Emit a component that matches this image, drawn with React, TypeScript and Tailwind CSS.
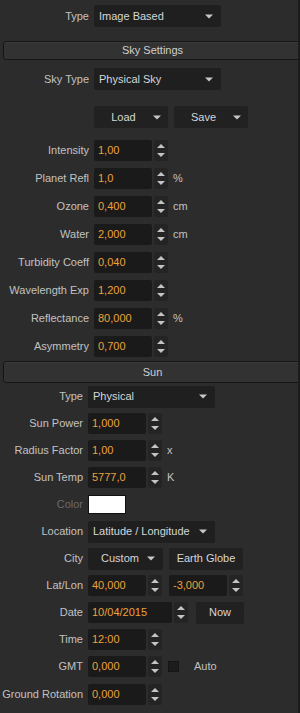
import React from 'react';

const font = { fontFamily: '"Liberation Sans", Arial, sans-serif' };

function Caret() {
  return (
    <svg width="8" height="5" viewBox="0 0 8 5" className="shrink-0">
      <path d="M0 0.5 L8 0.5 L4 4.5 Z" fill="#c8c8c8" />
    </svg>
  );
}

function Dropdown({ value, width, center }: { value: string; width: string; center?: boolean }) {
  return (
    <div className={`flex h-[22px] items-center rounded-[2px] bg-[#1f1f1f] pl-[5px] pr-[8px] text-[11px] text-[#d6d6d6] ${width}`}>
      <span className={`flex-1 whitespace-nowrap ${center ? 'text-center' : ''}`}>{value}</span>
      <Caret />
    </div>
  );
}

function Spinner() {
  return (
    <div className="ml-[2px] flex h-[21px] w-[14px] flex-col justify-between rounded-[2px] bg-[#242424] py-[3px]">
      <svg width="14" height="6" viewBox="0 0 14 6">
        <path d="M3 5 L11 5 L7 1 Z" fill="#c4c4c4" />
      </svg>
      <svg width="14" height="6" viewBox="0 0 14 6">
        <path d="M3 1 L11 1 L7 5 Z" fill="#c4c4c4" />
      </svg>
    </div>
  );
}

function NumField({ value, width = 'w-[58px]' }: { value: string; width?: string }) {
  return (
    <div className="flex items-center">
      <div className={`flex h-[21px] items-center rounded-[2px] bg-[#1a1a1a] pl-[4px] text-[11px] text-[#eda13a] ${width}`}>
        {value}
      </div>
      <Spinner />
    </div>
  );
}

function Row({
  label,
  labelW,
  h,
  dim,
  children,
}: {
  label: string;
  labelW: string;
  h: string;
  dim?: boolean;
  children: React.ReactNode;
}) {
  return (
    <div className={`flex items-center ${h}`}>
      <div className={`shrink-0 whitespace-nowrap pr-[5px] text-right text-[11px] ${dim ? 'text-[#6a6a6a]' : 'text-[#c2c2c2]'} ${labelW}`}>
        {label}
      </div>
      {children}
    </div>
  );
}

function Unit({ children }: { children: React.ReactNode }) {
  return <span className="ml-[5px] text-[11px] text-[#c2c2c2]">{children}</span>;
}

function SectionBar({ title, h }: { title: string; h: string }) {
  return (
    <div
      className={`ml-[3px] mr-[-4px] flex items-center justify-center rounded-l-[3px] border border-[#161616] bg-[#323232] text-[11px] text-[#cfcfcf] shadow-[inset_0_1px_0_#3a3a3a] ${h}`}
    >
      {title}
    </div>
  );
}

function Button({ label, width }: { label: string; width: string }) {
  return (
    <div className={`flex h-[22px] items-center justify-center rounded-[2px] bg-[#212121] text-[11px] text-[#d6d6d6] ${width}`}>
      {label}
    </div>
  );
}

const skyRows: { label: string; value: string; unit?: string }[] = [
  { label: 'Intensity', value: '1,00' },
  { label: 'Planet Refl', value: '1,0', unit: '%' },
  { label: 'Ozone', value: '0,400', unit: 'cm' },
  { label: 'Water', value: '2,000', unit: 'cm' },
  { label: 'Turbidity Coeff', value: '0,040' },
  { label: 'Wavelength Exp', value: '1,200' },
  { label: 'Reflectance', value: '80,000', unit: '%' },
  { label: 'Asymmetry', value: '0,700' },
];

export default function App() {
  const skyL = 'w-[94px]';
  const sunL = 'w-[88px]';
  const sunH = 'h-[27px]';
  return (
    <div style={font} className="h-[713px] w-[300px] overflow-hidden border-r-2 border-[#1c1c1c] bg-[#2c2c2c]">
      <Row label="Type" labelW={skyL} h="h-[32px]">
        <Dropdown value="Image Based" width="w-[127px]" />
      </Row>

      <div className="mt-[9px]">
        <SectionBar title="Sky Settings" h="h-[19px]" />
      </div>

      <Row label="Sky Type" labelW={skyL} h="h-[38px]">
        <Dropdown value="Physical Sky" width="w-[127px]" />
      </Row>

      <div className="flex h-[38px] items-center gap-[6px] pl-[94px]">
        <div className="flex h-[22px] w-[74px] items-center rounded-[2px] bg-[#212121] pr-[7px] text-[11px] text-[#d6d6d6]">
          <span className="flex-1 text-center">Load</span>
          <Caret />
        </div>
        <div className="flex h-[22px] w-[74px] items-center rounded-[2px] bg-[#212121] pr-[7px] text-[11px] text-[#d6d6d6]">
          <span className="flex-1 text-center">Save</span>
          <Caret />
        </div>
      </div>

      {skyRows.map((r) => (
        <Row key={r.label} label={r.label} labelW={skyL} h="h-[28px]">
          <NumField value={r.value} />
          {r.unit ? <Unit>{r.unit}</Unit> : null}
        </Row>
      ))}

      <div className="mt-[1px]">
        <SectionBar title="Sun" h="h-[22px]" />
      </div>

      <Row label="Type" labelW={sunL} h={sunH}>
        <Dropdown value="Physical" width="w-[127px]" />
      </Row>
      <Row label="Sun Power" labelW={sunL} h={sunH}>
        <NumField value="1,000" />
      </Row>
      <Row label="Radius Factor" labelW={sunL} h={sunH}>
        <NumField value="1,00" />
        <Unit>x</Unit>
      </Row>
      <Row label="Sun Temp" labelW={sunL} h={sunH}>
        <NumField value="5777,0" />
        <Unit>K</Unit>
      </Row>
      <Row label="Color" labelW={sunL} h={sunH} dim>
        <div className="h-[19px] w-[38px] border border-[#111] bg-white" />
      </Row>
      <Row label="Location" labelW={sunL} h={sunH}>
        <Dropdown value="Latitude / Longitude" width="w-[127px]" />
      </Row>
      <Row label="City" labelW={sunL} h={sunH}>
        <Dropdown value="Custom" width="w-[75px]" center />
        <div className="ml-[6px]">
          <Button label="Earth Globe" width="w-[74px]" />
        </div>
      </Row>
      <Row label="Lat/Lon" labelW={sunL} h={sunH}>
        <NumField value="40,000" />
        <div className="ml-[7px]">
          <NumField value="-3,000" />
        </div>
      </Row>
      <Row label="Date" labelW={sunL} h={sunH}>
        <NumField value="10/04/2015" width="w-[84px]" />
        <div className="ml-[8px]">
          <Button label="Now" width="w-[48px]" />
        </div>
      </Row>
      <Row label="Time" labelW={sunL} h={sunH}>
        <NumField value="12:00" />
      </Row>
      <Row label="GMT" labelW={sunL} h={sunH}>
        <NumField value="0,000" />
        <div className="ml-[6px] h-[11px] w-[11px] border border-[#151515] bg-[#1c1c1c]" />
        <span className="ml-[15px] text-[11px] text-[#c2c2c2]">Auto</span>
      </Row>
      <Row label="Ground Rotation" labelW={sunL} h="h-[29px]">
        <NumField value="0,000" />
      </Row>
    </div>
  );
}
